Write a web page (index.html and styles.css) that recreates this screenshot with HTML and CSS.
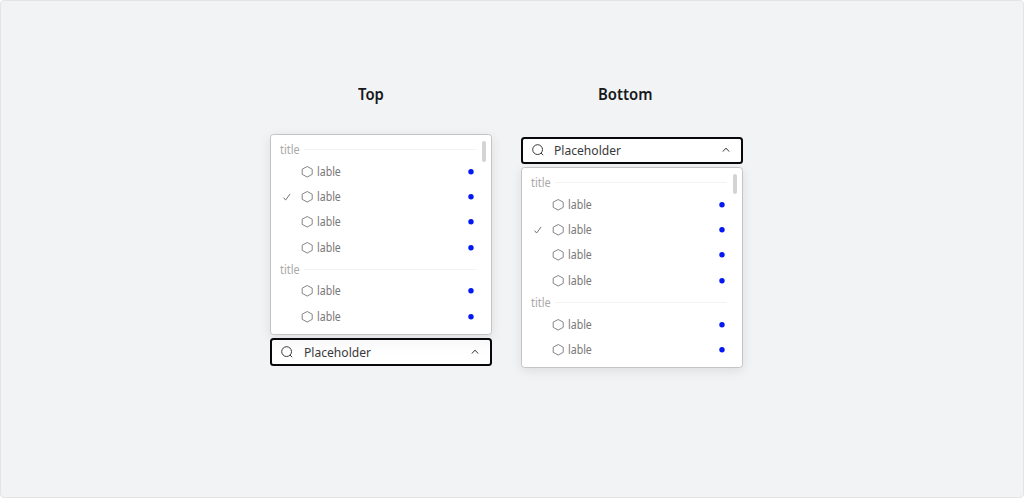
FILE: index.html
```
<!DOCTYPE html>
<html lang="en">
<head>
<meta charset="utf-8">
<title>Select placement</title>
<link rel="stylesheet" href="styles.css">
</head>
<body>
<svg class="defs" aria-hidden="true">
  <symbol id="hex" viewBox="0 0 12 12"><path d="M6.2 .5 11.2 3.15V8.35L6.2 11.05 1.2 8.35V3.15Z"/></symbol>
  <symbol id="check" viewBox="0 0 8 8"><path d="M.7 4.6 2.6 7.1 7.1.9"/></symbol>
  <symbol id="search" viewBox="0 0 12 12"><circle cx="5.6" cy="5.6" r="4.9"/><path d="M9 9 11.2 11.2"/></symbol>
  <symbol id="up" viewBox="0 0 8 6"><path d="M.9 4.6Q3.2 1.4 4 1.4T7.1 4.6"/></symbol>
  <symbol id="dot" viewBox="0 0 6 6"><circle cx="3" cy="2.8" r="2.7"/></symbol>
</svg>
<main class="board">
  <section class="column column-top">
    <h2 class="heading"><span class="heading-text">Top</span></h2>
    <div class="panel">
      <div class="list">
        <div class="group"><span class="title">title</span><i class="rule"></i></div>
        <div class="row"><svg class="hex"><use href="#hex"/></svg><span class="label">lable</span><svg class="dot"><use href="#dot"/></svg></div>
        <div class="row"><svg class="check"><use href="#check"/></svg><svg class="hex"><use href="#hex"/></svg><span class="label">lable</span><svg class="dot"><use href="#dot"/></svg></div>
        <div class="row"><svg class="hex"><use href="#hex"/></svg><span class="label">lable</span><svg class="dot"><use href="#dot"/></svg></div>
        <div class="row"><svg class="hex"><use href="#hex"/></svg><span class="label">lable</span><svg class="dot"><use href="#dot"/></svg></div>
        <div class="group"><span class="title">title</span><i class="rule"></i></div>
        <div class="row"><svg class="hex"><use href="#hex"/></svg><span class="label">lable</span><svg class="dot"><use href="#dot"/></svg></div>
        <div class="row"><svg class="hex"><use href="#hex"/></svg><span class="label">lable</span><svg class="dot"><use href="#dot"/></svg></div>
      </div>
      <i class="thumb"></i>
    </div>
    <div class="field shaded"><svg class="search"><use href="#search"/></svg><span class="placeholder">Placeholder</span><svg class="up"><use href="#up"/></svg></div>
  </section>
  <section class="column column-bottom">
    <h2 class="heading"><span class="heading-text">Bottom</span></h2>
    <div class="field"><svg class="search"><use href="#search"/></svg><span class="placeholder">Placeholder</span><svg class="up"><use href="#up"/></svg></div>
    <div class="panel">
      <div class="list">
        <div class="group"><span class="title">title</span><i class="rule"></i></div>
        <div class="row"><svg class="hex"><use href="#hex"/></svg><span class="label">lable</span><svg class="dot"><use href="#dot"/></svg></div>
        <div class="row"><svg class="check"><use href="#check"/></svg><svg class="hex"><use href="#hex"/></svg><span class="label">lable</span><svg class="dot"><use href="#dot"/></svg></div>
        <div class="row"><svg class="hex"><use href="#hex"/></svg><span class="label">lable</span><svg class="dot"><use href="#dot"/></svg></div>
        <div class="row"><svg class="hex"><use href="#hex"/></svg><span class="label">lable</span><svg class="dot"><use href="#dot"/></svg></div>
        <div class="group"><span class="title">title</span><i class="rule"></i></div>
        <div class="row"><svg class="hex"><use href="#hex"/></svg><span class="label">lable</span><svg class="dot"><use href="#dot"/></svg></div>
        <div class="row"><svg class="hex"><use href="#hex"/></svg><span class="label">lable</span><svg class="dot"><use href="#dot"/></svg></div>
      </div>
      <i class="thumb"></i>
    </div>
  </section>
</main>
</body>
</html>
```

FILE: styles.css
```
* { box-sizing: border-box; }
body { margin: 0; background: #fff; font-family: "Noto Sans", sans-serif; }
.defs { display: block; width: 0; height: 0; }
svg { flex: none; fill: none; stroke: currentColor; }
.board { display: flex; gap: 28.6px; height: 498px; padding: 82px 0 0 269.3px; background: #f2f3f5; border: 1px solid #e4e4e5; border-radius: 4px; }
.column { display: flex; flex-direction: column; gap: 3px; width: 222px; }
.heading { margin: 0 0 24.3px; padding-left: 87.7px; height: 24px; line-height: 22px; font-size: 16px; font-weight: 600; color: #18191b; }
.column-bottom .heading { padding-left: 77.2px; margin-bottom: 26.6px; }
.heading-text { display: inline-block; transform: scaleX(.93); transform-origin: left; }
.panel { position: relative; height: 201px; padding: 5px 15px 5px 9px; background: #fff; border: 1px solid #c4c4c5; border-radius: 3.5px; box-shadow: 0 3px 12px rgba(0, 0, 0, .09); }
.column-bottom .panel { padding-top: 5.7px; }
.group { display: flex; align-items: center; height: 18.6px; color: #a9a9a9; font-size: 12px; line-height: 18px; }
.title { width: 24px; transform: scaleX(.91); transform-origin: left; }
.rule { flex: 1; height: 1px; background: #f2f2f2; }
.row { display: flex; align-items: center; height: 25.34px; padding-right: 2px; color: #777; }
.hex { width: 12px; height: 12px; margin-left: 21px; stroke-width: .9; }
.check { width: 8px; height: 8px; margin-left: 3px; stroke-width: 1; }
.check + .hex { margin-left: 10px; }
.label { flex: 1; margin-left: 4px; font-size: 12px; line-height: 18px; transform: scaleX(.88); transform-origin: left; }
.dot { width: 6px; height: 6px; fill: #0417f5; stroke: none; }
.thumb { position: absolute; top: 6px; right: 5.3px; width: 3.7px; height: 20.5px; border-radius: 2px; background: #d4d4d4; }
.field { display: flex; align-items: center; height: 27.4px; padding: 0 11px 0 9px; border: 2px solid #09090b; border-radius: 3.5px; background: #fff; color: #38393b; }
.column-bottom .field { margin-bottom: -.2px; }
.shaded { position: relative; background: linear-gradient(#f9f9f9, #fff 65%); }
.search { width: 12px; height: 12px; stroke-width: 1; }
.placeholder { flex: 1; margin-left: 10.5px; font-size: 13.3px; line-height: 20px; transform: scaleX(.91); transform-origin: left; }
.up { width: 8px; height: 6px; stroke-width: 1; }
```
